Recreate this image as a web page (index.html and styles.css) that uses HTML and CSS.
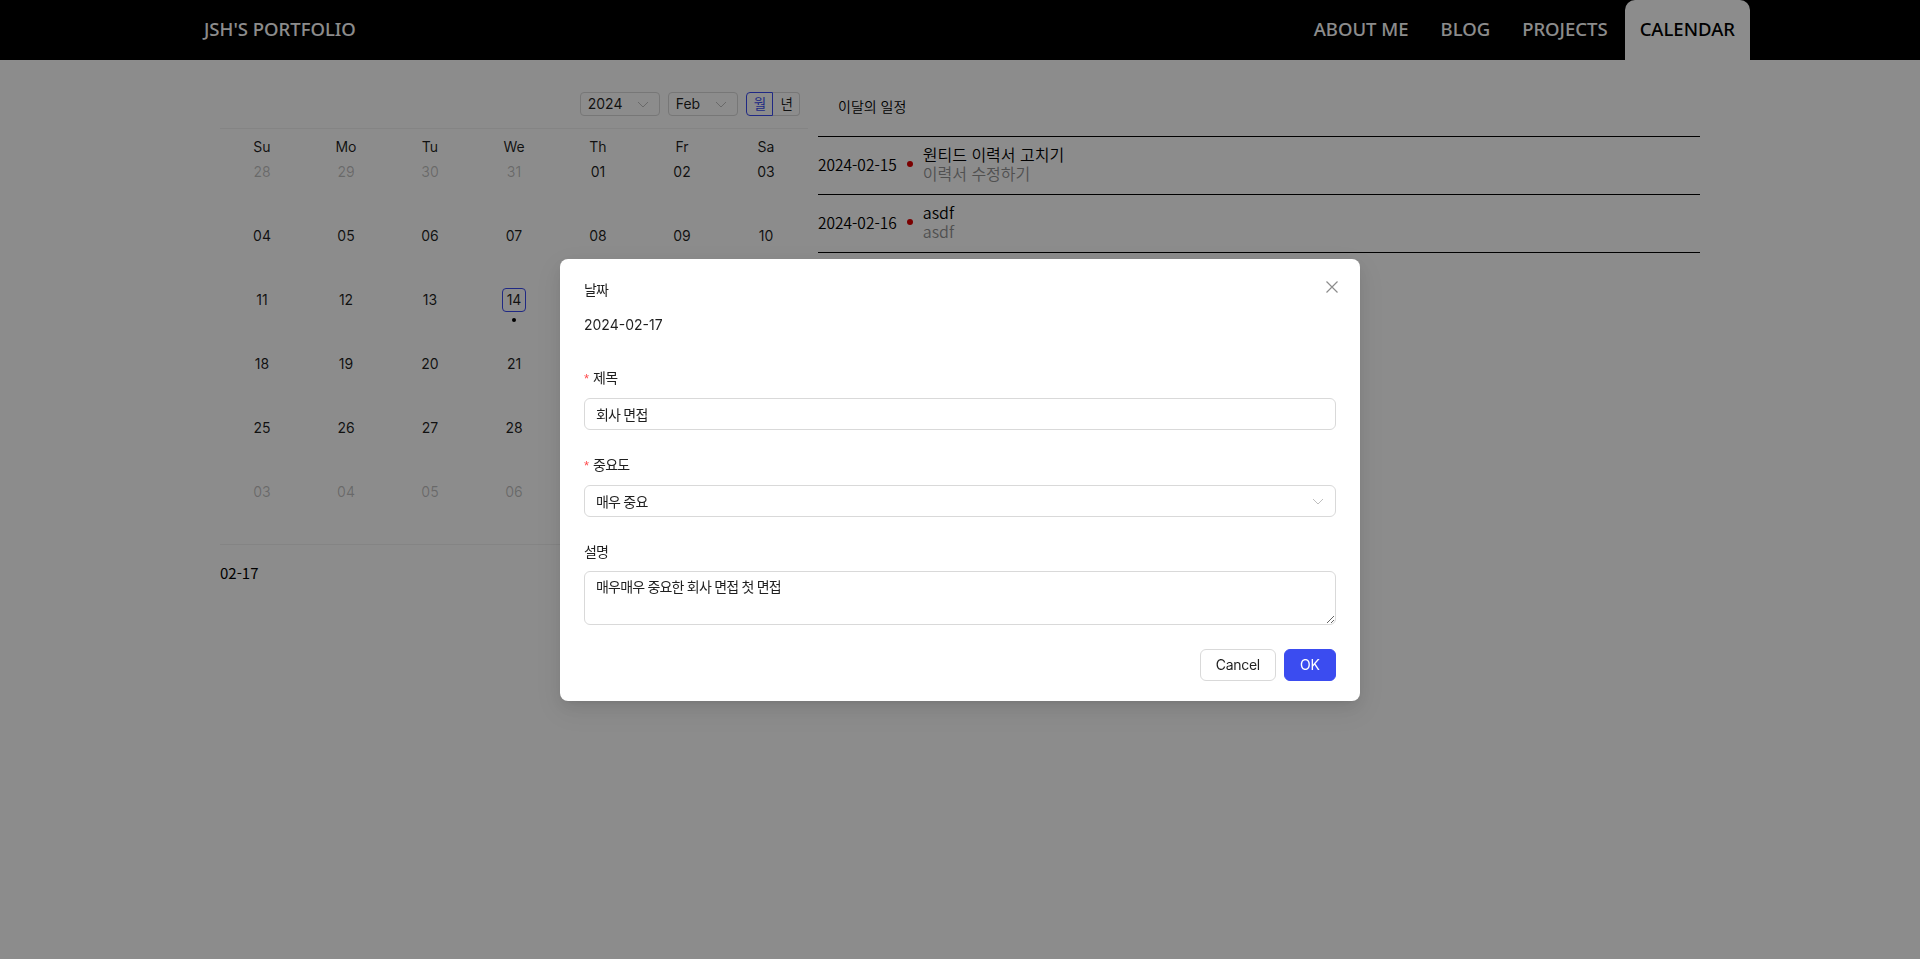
FILE: index.html
```html
<!DOCTYPE html>
<html lang="ko">
<head>
<meta charset="utf-8">
<title>Calendar</title>
<link rel="stylesheet" href="styles.css">
</head>
<body>
<header class="topbar">
  <div class="logo">JSH'S PORTFOLIO</div>
  <nav class="nav">
    <a class="nav-item">ABOUT ME</a>
    <a class="nav-item">BLOG</a>
    <a class="nav-item">PROJECTS</a>
    <a class="nav-item active">CALENDAR</a>
  </nav>
</header>

<main class="page">
  <section class="cal">
    <div class="cal-header">
      <div class="sel sel-year"><span>2024</span><svg viewBox="0 0 12 12"><polyline points="1,4 6,9 11,4" fill="none" stroke="currentColor" stroke-width="1"/></svg></div>
      <div class="sel sel-month"><span>Feb</span><svg viewBox="0 0 12 12"><polyline points="1,4 6,9 11,4" fill="none" stroke="currentColor" stroke-width="1"/></svg></div>
      <div class="radio"><span class="radio-btn on ko-s">월</span><span class="radio-btn ko-s">년</span></div>
    </div>
    <div class="cal-body">
      <div class="week"><span>Su</span><span>Mo</span><span>Tu</span><span>We</span><span>Th</span><span>Fr</span><span>Sa</span></div>
      <div class="days">
        <div class="day off"><span class="num">28</span></div>
        <div class="day off"><span class="num">29</span></div>
        <div class="day off"><span class="num">30</span></div>
        <div class="day off"><span class="num">31</span></div>
        <div class="day"><span class="num">01</span></div>
        <div class="day"><span class="num">02</span></div>
        <div class="day"><span class="num">03</span></div>

        <div class="day"><span class="num">04</span></div>
        <div class="day"><span class="num">05</span></div>
        <div class="day"><span class="num">06</span></div>
        <div class="day"><span class="num">07</span></div>
        <div class="day"><span class="num">08</span></div>
        <div class="day"><span class="num">09</span></div>
        <div class="day"><span class="num">10</span></div>

        <div class="day"><span class="num">11</span></div>
        <div class="day"><span class="num">12</span></div>
        <div class="day"><span class="num">13</span></div>
        <div class="day today"><span class="num">14</span><span class="dot"></span></div>
        <div class="day"><span class="num">15</span></div>
        <div class="day"><span class="num">16</span></div>
        <div class="day"><span class="num">17</span></div>

        <div class="day"><span class="num">18</span></div>
        <div class="day"><span class="num">19</span></div>
        <div class="day"><span class="num">20</span></div>
        <div class="day"><span class="num">21</span></div>
        <div class="day"><span class="num">22</span></div>
        <div class="day"><span class="num">23</span></div>
        <div class="day"><span class="num">24</span></div>

        <div class="day"><span class="num">25</span></div>
        <div class="day"><span class="num">26</span></div>
        <div class="day"><span class="num">27</span></div>
        <div class="day"><span class="num">28</span></div>
        <div class="day"><span class="num">29</span></div>
        <div class="day off"><span class="num">01</span></div>
        <div class="day off"><span class="num">02</span></div>

        <div class="day off"><span class="num">03</span></div>
        <div class="day off"><span class="num">04</span></div>
        <div class="day off"><span class="num">05</span></div>
        <div class="day off"><span class="num">06</span></div>
        <div class="day off"><span class="num">07</span></div>
        <div class="day off"><span class="num">08</span></div>
        <div class="day off"><span class="num">09</span></div>
      </div>
    </div>
    <div class="cal-foot">02-17</div>
  </section>

  <section class="list">
    <div class="list-title">이달의 일정</div>
    <ul class="events">
      <li class="event">
        <span class="ev-date">2024-02-15</span>
        <span class="ev-dot"></span>
        <div class="ev-text">
          <div class="ev-title">원티드 이력서 고치기</div>
          <div class="ev-sub">이력서 수정하기</div>
        </div>
      </li>
      <li class="event">
        <span class="ev-date">2024-02-16</span>
        <span class="ev-dot"></span>
        <div class="ev-text">
          <div class="ev-title">asdf</div>
          <div class="ev-sub">asdf</div>
        </div>
      </li>
    </ul>
  </section>
</main>

<div class="mask"></div>
<div class="modal-wrap">
  <div class="modal">
    <button class="close" type="button" aria-label="Close">
      <svg viewBox="0 0 12 12"><path d="M0.5 0.5 L11.5 11.5 M11.5 0.5 L0.5 11.5" fill="none" stroke="currentColor" stroke-width="1.2"/></svg>
    </button>
    <div class="item">
      <div class="label"><span class="ko">날짜</span></div>
      <div class="value">2024-02-17</div>
    </div>
    <div class="item">
      <div class="label"><span class="req">*</span><span class="ko">제목</span></div>
      <div class="input"><span class="ko">회사 면접</span></div>
    </div>
    <div class="item">
      <div class="label"><span class="req">*</span><span class="ko">중요도</span></div>
      <div class="input select"><span class="ko">매우 중요</span><svg viewBox="0 0 12 12"><polyline points="1,4 6,9 11,4" fill="none" stroke="currentColor" stroke-width="1"/></svg></div>
    </div>
    <div class="item">
      <div class="label"><span class="ko">설명</span></div>
      <textarea class="textarea ko" rows="2">매우매우 중요한 회사 면접 첫 면접</textarea>
    </div>
    <div class="footer">
      <button class="btn btn-cancel" type="button">Cancel</button>
      <button class="btn btn-ok" type="button">OK</button>
    </div>
  </div>
</div>
</body>
</html>
```

FILE: styles.css
```css
* { box-sizing: border-box; }

body {
  margin: 0;
  background: #fff;
  color: rgba(0, 0, 0, 0.88);
  font-family: "Inter", "Noto Sans CJK KR", sans-serif;
  font-size: 14px;
}

.ko {
  font-size: 14px;
  letter-spacing: -0.8px;
}
.ko-s {
  font-size: 13.5px;
  letter-spacing: -0.8px;
}

/* ---------- top bar ---------- */
.topbar {
  height: 60px;
  background: #000;
  display: flex;
  justify-content: space-between;
  padding: 0 170px 0 204px;
  font-family: "Noto Sans", "Open Sans", sans-serif;
  font-size: 18.5px;
  font-weight: 500;
}
.logo {
  color: #fff;
  display: flex;
  align-items: center;
  padding-bottom: 4px;
}
.nav {
  display: flex;
  gap: 2px;
}
.nav-item {
  color: #fff;
  display: flex;
  align-items: center;
  padding: 0 15px 4px;
  text-decoration: none;
}
.nav-item.active {
  background: #fff;
  color: #000;
  border-radius: 10px 10px 0 0;
}

/* ---------- page ---------- */
.page {
  width: 1480px;
  margin: 0 auto;
  padding-top: 20px;
  display: flex;
  gap: 10px;
  align-items: flex-start;
}

/* ---------- calendar ---------- */
.cal {
  width: 588px;
  flex: none;
}
.cal-header {
  display: flex;
  justify-content: flex-end;
  gap: 8px;
  padding: 12px 8px;
}
.sel {
  height: 24px;
  border: 1px solid #d9d9d9;
  border-radius: 4px;
  display: flex;
  align-items: center;
  justify-content: space-between;
  padding: 0 7px;
  line-height: 22px;
}
.sel-year { width: 80px; }
.sel-month { width: 70px; }
.sel svg {
  width: 12px;
  height: 12px;
  color: rgba(0, 0, 0, 0.25);
  margin-right: 3px;
}
.radio { display: flex; }
.radio-btn {
  height: 24px;
  line-height: 22px;
  padding: 0 7px;
  border: 1px solid #d9d9d9;
}
.radio-btn.on {
  border-color: #3b4cf0;
  color: #3b4cf0;
  border-radius: 4px 0 0 4px;
}
.radio-btn + .radio-btn {
  border-left: none;
  border-radius: 0 4px 4px 0;
}

.cal-body {
  border-top: 1px solid #f0f0f0;
  padding-top: 7px;
}
.week {
  display: grid;
  grid-template-columns: repeat(7, 1fr);
  height: 24px;
  line-height: 22px;
  text-align: center;
}
.days {
  display: grid;
  grid-template-columns: repeat(7, 1fr);
}
.day {
  height: 64px;
  display: flex;
  flex-direction: column;
  align-items: center;
}
.num {
  width: 24px;
  height: 24px;
  line-height: 24px;
  text-align: center;
  border-radius: 4px;
}
.day.off .num { color: rgba(0, 0, 0, 0.25); }
.day.today .num {
  border: 1px solid #3b4cf0;
  line-height: 22px;
}
.dot {
  width: 4px;
  height: 4px;
  border-radius: 50%;
  background: #000;
  margin-top: 6px;
}
.cal-foot {
  border-top: 1px solid #f0f0f0;
  padding-top: 16px;
  line-height: 24px;
  font-family: "Noto Sans CJK KR", sans-serif;
  font-size: 15px;
  color: #000;
}

/* ---------- list ---------- */
.list {
  flex: 1;
  font-family: "Noto Sans CJK KR", sans-serif;
  font-weight: 350;
  color: #000;
}
.list-title {
  padding: 14px 20px;
  line-height: 24px;
  margin-bottom: 4px;
  font-size: 14px;
}
.events {
  list-style: none;
  margin: 0;
  padding: 0;
}
.event {
  border-top: 1px solid #000;
  display: flex;
  align-items: center;
  gap: 10px;
  padding: 8px 0 11px;
  font-size: 16px;
}
.event:last-child { border-bottom: 1px solid #000; }
.ev-date { line-height: 19px; font-size: 15.5px; }
.ev-dot {
  width: 6px;
  height: 6px;
  border-radius: 50%;
  background: #e00000;
}
.ev-title, .ev-sub { line-height: 19px; }
.ev-sub { color: #939393; }

/* ---------- modal ---------- */
.mask {
  position: fixed;
  inset: 0;
  background: rgba(0, 0, 0, 0.45);
}
.modal-wrap {
  position: fixed;
  inset: 0;
  display: flex;
  align-items: center;
  justify-content: center;
}
.modal {
  position: relative;
  width: 800px;
  background: #fff;
  border-radius: 8px;
  padding: 20px 24px;
  box-shadow: 0 6px 16px 0 rgba(0, 0, 0, 0.08), 0 3px 6px -4px rgba(0, 0, 0, 0.12), 0 9px 28px 8px rgba(0, 0, 0, 0.05);
}
.close {
  position: absolute;
  top: 17px;
  right: 17px;
  width: 22px;
  height: 22px;
  padding: 0;
  border: none;
  background: transparent;
  color: rgba(0, 0, 0, 0.45);
  display: flex;
  align-items: center;
  justify-content: center;
}
.close svg { width: 12px; height: 12px; }

.item { margin-bottom: 24px; }
.label {
  line-height: 22px;
  padding-bottom: 8px;
}
.req {
  color: #ff4d4f;
  margin-right: 4px;
  font-family: "Liberation Sans", sans-serif;
  font-size: 13px;
}
.value {
  height: 34px;
  line-height: 32px;
}
.input {
  height: 32px;
  border: 1px solid #d9d9d9;
  border-radius: 6px;
  padding: 0 11px;
  display: flex;
  align-items: center;
}
.select { justify-content: space-between; }
.select svg {
  width: 12px;
  height: 12px;
  color: rgba(0, 0, 0, 0.25);
}
.textarea {
  display: block;
  width: 100%;
  height: 54px;
  padding: 4px 11px;
  border: 1px solid #d9d9d9;
  border-radius: 6px;
  line-height: 22px;
  font-family: "Inter", "Noto Sans CJK KR", sans-serif;
  color: rgba(0, 0, 0, 0.88);
  resize: vertical;
  outline: none;
}
.footer {
  display: flex;
  justify-content: flex-end;
  gap: 8px;
}
.btn {
  height: 32px;
  padding: 4px 15px;
  border: 1px solid #d9d9d9;
  border-radius: 6px;
  background: #fff;
  color: rgba(0, 0, 0, 0.88);
  font-family: "Inter", sans-serif;
  font-size: 14px;
  line-height: 22px;
}
.btn-cancel { letter-spacing: -0.3px; }
.btn-ok {
  background: #3b4cf0;
  border-color: #3b4cf0;
  color: #fff;
}
```
